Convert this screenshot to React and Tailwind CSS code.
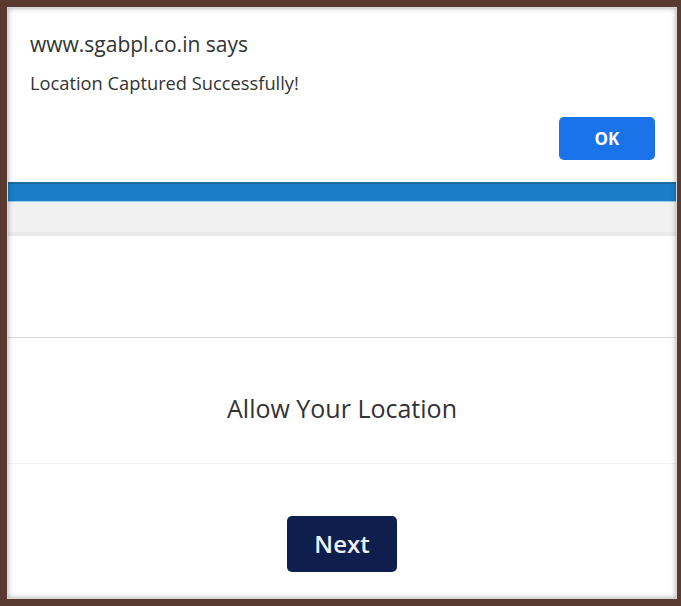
import React from "react"

const App = () => {
  return (
    <div className="w-[681px] h-[606px] bg-[#5a3a30] pt-[7px] pl-[7px] pr-[4px] pb-[7px]" style={{ fontFamily: '"Open Sans", "Noto Sans", sans-serif' }}>
      <div className="relative h-full flex flex-col bg-white overflow-hidden">
        {/* browser alert dialog */}
        <div className="h-[175px] flex flex-col px-[23px] pt-[25px]">
          <p className="text-[21px] leading-6 text-[#333]">www.sgabpl.co.in says</p>
          <p className="mt-[17px] text-[18.3px] leading-5 text-[#333]">Location Captured Successfully!</p>
          <div className="flex justify-end mt-[24px]">
            <button className="w-[96px] h-[43px] rounded-[5px] bg-[#1a73e8] text-white text-[17px] font-bold mr-[-1px]">
              OK
            </button>
          </div>
        </div>

        {/* page behind */}
        <div className="h-[20px] bg-[#1a7dc7] border-t-2 border-t-[#1d6a9c] border-b border-b-[#8fd0e8]" />
        <div className="h-[30px] bg-[#f1f1f1]" />
        <div className="h-[4px] bg-[#e9e9e9]" />
        <div className="h-[102px] border-b border-[#dcdcdc]" />
        <div className="h-[126px] flex items-center justify-center border-b border-[#f2f2f2]">
          <span className="text-[25px] leading-8 text-[#333] mt-[14px]">Allow Your Location</span>
        </div>
        <div className="flex justify-center pt-[52px]">
          <button className="w-[110px] h-[56px] rounded-[5px] bg-[#0e1f4e] text-[#eef2fa] text-[24px] font-semibold">
            Next
          </button>
        </div>

        <div className="pointer-events-none absolute inset-0 border border-[#d8d8d8] shadow-[inset_0_0_5px_rgba(0,0,0,0.35)]" />
      </div>
    </div>
  )
}

export default App
